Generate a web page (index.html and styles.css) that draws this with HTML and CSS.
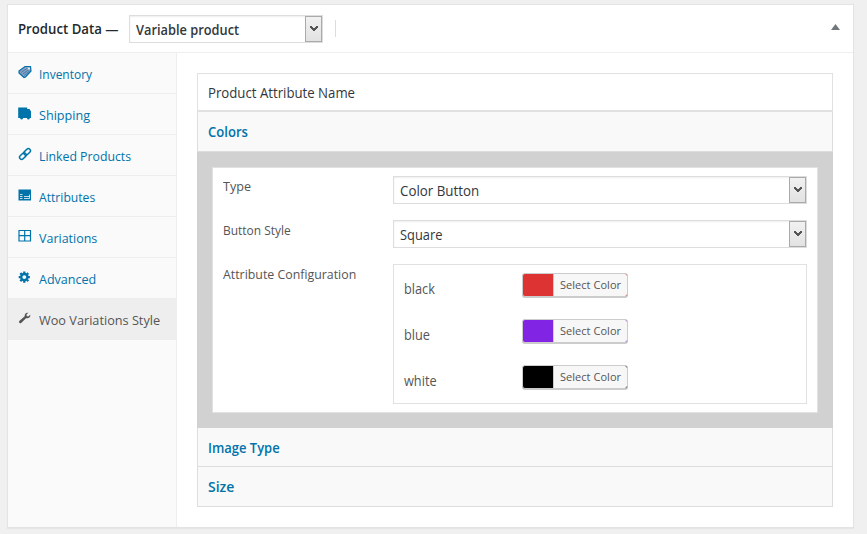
FILE: index.html
```html
<!DOCTYPE html>
<html lang="en">
<head>
<meta charset="utf-8">
<title>Product Data</title>
<link rel="stylesheet" href="styles.css">
</head>
<body>
<section class="panel">
  <header class="head">
    <h2><span class="t-head">Product Data —</span></h2>
    <div class="select type-select"><span class="t-var">Variable product</span><i class="arrow"><svg viewBox="0 0 8 6"><path d="M0 0h2v1h1v1h2V1h1V0h2v2H7v1H6v1H5v1H3V4H2V3H1V2H0z"/></svg></i></div>
    <i class="sep"></i>
    <svg class="toggle" viewBox="0 0 9 6"><path d="M4.500 0L9 6H0z"/></svg>
  </header>
  <div class="body">
    <nav class="tabs">
      <a class="tab"><svg viewBox="0 0 14 14"><path class="tag" d="M1 6L7 1.500 12.500 1.500l.5 4.500-5.500 6L6 12.500 1 8z"/><path class="line thin" d="M1 6L7 1.500 12.500 1.500l.5 4.500-5.500 6L6 12.500 1 8z"/><path class="line weave" d="M3 7.500l6-4M4.500 9l6-4M6 10.500l5.500-4.500"/><circle class="hole" cx="11" cy="3.500" r=".9"/></svg><span class="n1">Inventory</span></a>
      <a class="tab"><svg viewBox="0 0 14 14"><path d="M.2 1.500h9v1.500h2.300l1.500 2.500v6.500H.2z"/><circle cx="3.600" cy="12.200" r="1.200"/><circle cx="10.400" cy="12.200" r="1.200"/></svg><span class="n2">Shipping</span></a>
      <a class="tab"><svg viewBox="0 0 14 14"><g class="line" transform="rotate(-45 7 7)"><rect x="0.200" y="4.900" width="7.600" height="4.200" rx="2.100"/><rect x="6.200" y="4.900" width="7.600" height="4.200" rx="2.100"/></g></svg><span class="n3">Linked Products</span></a>
      <a class="tab"><svg viewBox="0 0 14 14"><path d="M.5 1.500h12.500v11H.5z"/><path class="cut" d="M2 6.500h2.500M2 8.500h2.500M2 10.500h2.500M6 8.500h5.500M11.500 6.500v4M6 10.500h5.500"/></svg><span class="n4">Attributes</span></a>
      <a class="tab"><svg viewBox="0 0 14 14"><path class="line thin" d="M1 1.500h11.500v10.500H1zM6.700 1.500v10.500M1 6.700h11.500"/></svg><span class="n5">Variations</span></a>
      <a class="tab"><svg viewBox="0 0 14 14"><g transform="translate(0 .8)"><circle class="line gear" cx="6.300" cy="6.300" r="3.100"/><path class="line gear" d="M6.300 .7v2M6.300 9.900v2M.7 6.300h2M9.900 6.300h2M2.300 2.300l1.400 1.400M8.900 8.900l1.400 1.400M10.300 2.300L8.900 3.700M3.700 8.900l-1.400 1.400"/></g></svg><span class="n6">Advanced</span></a>
      <a class="tab active"><svg viewBox="0 0 14 14"><path d="M12.200 3.800L10.200 5.500 8.800 5.100l-.4-1.300L10.300 1.800C8.500 1.100 6.200 2.800 6.700 5.300L1.300 10.100c-1 1 .6 3 1.900 1.900L8 7.200c2.600.8 4.900-1.300 4.200-3.400z"/></svg><span class="n7">Woo Variations Style</span></a>
    </nav>
    <main class="content">
      <div class="table">
        <div class="row title"><span class="t-pan">Product Attribute Name</span></div>
        <div class="row colors"><span class="t-colors">Colors</span></div>
        <div class="open">
          <div class="form">
            <label><span class="t-type">Type</span></label>
            <div class="select"><span class="t-cb">Color Button</span><i class="arrow"><svg viewBox="0 0 8 6"><path d="M0 0h2v1h1v1h2V1h1V0h2v2H7v1H6v1H5v1H3V4H2V3H1V2H0z"/></svg></i></div>
            <label><span class="t-bs">Button Style</span></label>
            <div class="select"><span class="t-sq">Square</span><i class="arrow"><svg viewBox="0 0 8 6"><path d="M0 0h2v1h1v1h2V1h1V0h2v2H7v1H6v1H5v1H3V4H2V3H1V2H0z"/></svg></i></div>
            <label><span class="t-ac">Attribute Configuration</span></label>
            <div class="config">
              <div class="opt"><div class="name"><span>black</span></div><button class="picker red"><span>Select Color</span></button></div>
              <div class="opt"><div class="name"><span>blue</span></div><button class="picker purple"><span>Select Color</span></button></div>
              <div class="opt"><div class="name"><span>white</span></div><button class="picker black"><span>Select Color</span></button></div>
            </div>
          </div>
        </div>
        <div class="row image"><span class="t-img">Image Type</span></div>
        <div class="row size"><span class="t-size">Size</span></div>
      </div>
    </main>
  </div>
</section>
</body>
</html>
```
FILE: styles.css
```css
* { box-sizing: border-box; }
body { margin: 0; padding: 4px 13px 6px 7px; height: 534px; background: #f0f0f0; font: 13px/20px "Open Sans", "Noto Sans", sans-serif; color: #555; overflow: hidden; }
.panel { height: 524px; display: flex; flex-direction: column; background: #fff; border: 1px solid #e3e3e3; box-shadow: 0 1px 1px rgba(0,0,0,.04); }
.head { height: 48px; flex: none; display: flex; align-items: center; padding-left: 10px; padding-right: 13px; border-bottom: 1px solid #eee; }
.head h2 { margin: 0; width: 111px; font-size: 14px; font-weight: 600; color: #23282d; white-space: nowrap; }
.select { height: 28px; display: flex; align-items: center; justify-content: space-between; border: 1px solid #ddd; background: #fff; box-shadow: inset 0 1px 2px rgba(0,0,0,.07); color: #32373c; font-size: 14px; padding: 0 0 0 6px; white-space: nowrap; }
.select > span { padding-top: 2px; }
.type-select { width: 194px; font-weight: 600; }
.arrow { width: 17px; height: 26px; border: 1px solid #aaa; background: linear-gradient(#f1f1f1, #e2e2e2); display: flex; align-items: center; justify-content: center; }
.arrow svg { width: 8px; height: 6px; fill: #555; shape-rendering: crispEdges; }
.sep { width: 1px; height: 17px; background: #ddd; margin-left: 12px; }
.toggle { width: 9px; height: 6px; margin: 0 0 3px auto; fill: #72777c; }
.body { flex: 1; display: flex; }
.tabs { width: 169px; background: #fafafa; border-right: 1px solid #eee; }
.tab { height: 41px; display: flex; align-items: center; gap: 7px; padding: 2px 0 0 10px; border-bottom: 1px solid #eee; color: #0073aa; white-space: nowrap; }
.tab svg { width: 14px; height: 14px; fill: currentColor; margin-bottom: 4px; }
.tab .line { fill: none; stroke: currentColor; stroke-width: 1.500; }
.tab .thin { stroke-width: 1.200; }
.tab .weave { stroke-width: .6; }
.tab .gear { stroke-width: 2.300; }
.tab .tag { fill: #8f9dc0; }
.tab .hole { fill: #fafafa; }
.tab .cut { fill: none; stroke: #fafafa; stroke-width: .8; }
.tab.active { background: #eee; color: #555; }
.content { flex: 1; padding: 20px; }
.table { width: 636px; }
.row { display: flex; align-items: center; padding: 0 10px; border: 1px solid #ddd; border-top: 0; background: #f9f9f9; color: #0073aa; font-size: 14px; font-weight: 600; }
.title { height: 38px; border: 1px solid #e1e1e1; background: #fff; color: #32373c; font-weight: 400; padding-top: 2px; }
.colors { height: 41px; border-top: 1px solid #e1e1e1; padding-top: 1px; }
.open { height: 276px; background: #d1d1d1; padding: 15px; }
.form { height: 246px; background: #fff; border: 1px solid #e1e1e1; padding: 8px 10px; display: grid; grid-template-columns: 170px 414px; grid-template-rows: 28px 28px 140px; row-gap: 16px; }
.config { border: 1px solid #e1e1e1; padding: 8px 10px 0; }
.opt { height: 46px; display: flex; font-size: 14px; }
.name { width: 118px; padding-top: 6px; }
.picker { width: 106px; height: 24px; padding: 0; border: 1px solid #ccc; border-radius: 3px; box-shadow: 0 1px 0 #ccc; display: flex; overflow: hidden; font: 11px/22px "Open Sans", sans-serif; color: #555; }
.picker span { margin-left: 30px; width: 74px; height: 22px; text-align: center; background: #f7f7f7; border-left: 1px solid #ccc; border-radius: 0 2px 2px 0; white-space: nowrap; letter-spacing: .05px; }
.red { background: #dd3333; }
.purple { background: #8224e3; }
.black { background: #000; }
.image { height: 39px; padding-top: 2px; }
.size { height: 40px; padding-top: 1px; }

/* condensed label widths */
.head h2 span, .tab span, .row span, .select > span, label span, .name span { display: inline-block; transform-origin: 0 50%; }
.t-head { transform: scaleX(.943); }
.t-var { transform: scaleX(.915); }
.tab .n1 { transform: scaleX(.92); }
.tab .n2 { transform: scaleX(.97); }
.tab .n3 { transform: scaleX(.945); }
.tab .n4 { transform: scaleX(.935); }
.tab .n5 { transform: scaleX(.96); }
.tab .n6 { transform: scaleX(.965); }
.tab .n7 { transform: scaleX(.977); }
.t-pan { transform: scaleX(.943); }
.t-colors { transform: scaleX(.935); }
.t-type { transform: scaleX(.97); }
.t-bs { transform: scaleX(.92); }
.t-ac { transform: scaleX(.95); }
.t-cb { transform: scaleX(.953); }
.t-sq { transform: scaleX(.92); }
.name span { transform: scaleX(.91); }
.t-img { transform: scaleX(.925); }
```
